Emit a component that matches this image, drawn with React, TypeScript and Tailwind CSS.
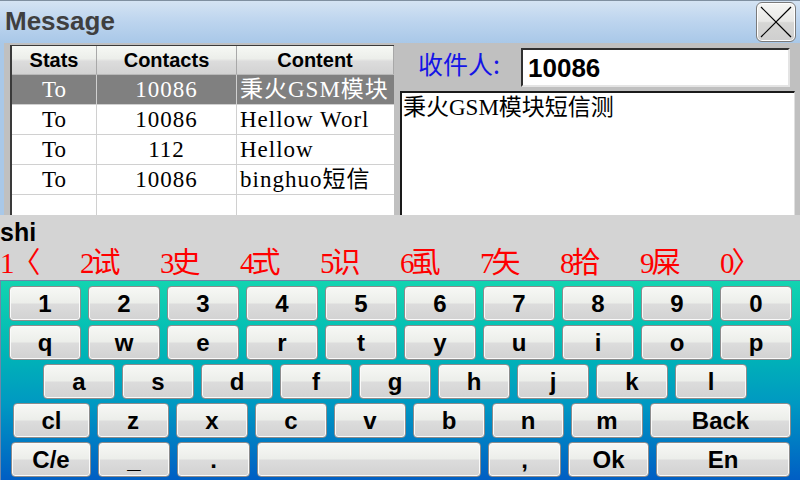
import React from "react";

type Row = { stats: string; contact: string; content: string; selected?: boolean };

const rows: Row[] = [
  { stats: "To", contact: "10086", content: "秉火GSM模块", selected: true },
  { stats: "To", contact: "10086", content: "Hellow Worl" },
  { stats: "To", contact: "112", content: "Hellow" },
  { stats: "To", contact: "10086", content: "binghuo短信" },
  { stats: "", contact: "", content: "" },
];

const candidates = ["1〈", "2试", "3史", "4式", "5识", "6虱", "7矢", "8拾", "9屎", "0〉"];

type Key = { label: string; w: string };

const k = (label: string, w = "w-[72px]"): Key => ({ label, w });

const row1 = "1234567890".split("").map((c) => k(c));
const row2 = "qwertyuiop".split("").map((c) => k(c));
const row3 = "asdfghjkl".split("").map((c) => k(c));
const row4 = [k("cl", "w-[77px]"), ..."zxcvbnm".split("").map((c) => k(c)), k("Back", "w-[141px]")];
const row5 = [
  k("C/e", "w-[80px]"),
  k("_"),
  k(".", "w-[73px]"),
  k("", "w-[224px]"),
  k(",", "w-[73px]"),
  k("Ok", "w-[81px]"),
  k("En", "w-[134px]"),
];

const KeyButton = ({ item }: { item: Key }) => (
  <div
    className={`${item.w} h-[35px] shrink-0 rounded-[4px] border border-[#8c8c8c] bg-[linear-gradient(180deg,#f7f8f5_0%,#eceeea_48%,#dcdcdc_52%,#d2d2d2_100%)] shadow-[inset_0_0_0_1px_#fafafa] flex items-center justify-center text-[24px] font-bold text-black leading-none`}
  >
    {item.label}
  </div>
);

const KeyRow = ({ keys, className }: { keys: Key[]; className: string }) => (
  <div className={`flex gap-[7px] ${className}`}>
    {keys.map((item, i) => (
      <KeyButton key={i} item={item} />
    ))}
  </div>
);

const serif = "font-['Liberation_Serif','Noto_Sans_CJK_SC',serif]";

export default function App() {
  return (
    <div className="w-[800px] h-[480px] overflow-hidden flex flex-col font-['Liberation_Sans','Noto_Sans_CJK_SC',sans-serif] bg-[#c0c0c0]">
      {/* title bar */}
      <div className="h-[43px] shrink-0 flex items-start justify-between border-t border-[#7f8fa0] bg-[linear-gradient(180deg,#d4e3f3_0%,#bcd4ee_50%,#a9c8e8_100%)] pl-[5px] pr-[4px]">
        <div className="text-[26px] font-bold text-[#3f3f3f] leading-none mt-[7px]">Message</div>
        <div className="w-[40px] h-[40px] mt-[1px] rounded-[6px] border border-[#7a7a7a] bg-[linear-gradient(180deg,#f6f6f4_0%,#e8e8e6_48%,#d6d6d4_52%,#cfcfcf_100%)] shadow-[inset_0_0_0_1px_#ffffff] flex items-center justify-center">
          <svg width="34" height="34" viewBox="0 0 34 34">
            <line x1="2" y1="2" x2="32" y2="32" stroke="#000" strokeWidth="1.2" />
            <line x1="32" y1="2" x2="2" y2="32" stroke="#000" strokeWidth="1.2" />
          </svg>
        </div>
      </div>

      {/* main */}
      <div className="h-[172px] shrink-0 flex border-l-[4px] border-[#a9c8e8] pl-[6px] pt-[2px] overflow-hidden">
        <div className="w-[384px] shrink-0 border-l-2 border-t border-[#3a3a3a] bg-white h-[200px]">
          <div className="grid grid-cols-[85px_140px_157px] h-[29px] bg-[linear-gradient(180deg,#f6f8f4_0%,#eceeea_45%,#dcdcdc_55%,#d2d2d2_100%)] border-b border-[#b8b8b8]">
            {["Stats", "Contacts", "Content"].map((h) => (
              <div key={h} className="flex items-center justify-center border-r border-[#a8a8a8] text-[20px] font-bold text-black leading-none">
                {h}
              </div>
            ))}
          </div>
          {rows.map((r, i) => (
            <div
              key={i}
              className={`grid grid-cols-[85px_140px_157px] h-[30px] border-b border-[#d0d0d0] ${serif} text-[23px] leading-none ${
                r.selected ? "bg-[#808080] text-white" : "bg-white text-black"
              }`}
            >
              <div className="flex items-center justify-center border-r border-[#d0d0d0]">{r.stats}</div>
              <div className="flex items-center justify-center border-r border-[#d0d0d0] tracking-[1px]">{r.contact}</div>
              <div className="flex items-center pl-[3px] whitespace-nowrap overflow-hidden tracking-[1px]">{r.content}</div>
            </div>
          ))}
        </div>

        <div className="ml-[6px] w-[395px] shrink-0 flex flex-col">
          <div className="flex items-start h-[46px]">
            <div className="w-[121px] pl-[18px] pt-[6px] text-[25px] text-[#1414e6] leading-none font-['Noto_Sans_CJK_SC',sans-serif]">
              收件人:
            </div>
            <div className="mt-[3px] w-[269px] h-[39px] bg-white border-2 border-t-[#303030] border-l-[#303030] border-r-[#e4e4e4] border-b-[#e4e4e4] flex items-center pl-[5px] text-[26px] font-bold text-black leading-none">
              10086
            </div>
          </div>
          <div className="mt-[2px] h-[130px] bg-white border-t-2 border-l-2 border-[#1a1a1a] border-r border-r-[#e0e0e0] pl-[1px] pt-[1px]">
            <div className={`${serif} text-[23px] leading-tight text-black`}>秉火GSM模块短信测</div>
          </div>
        </div>
      </div>

      {/* IME candidate bar */}
      <div className="h-[65px] shrink-0 bg-[#d4d4d4] flex flex-col">
        <div className="h-[32px] flex items-end pb-[2px] text-[25px] font-bold text-black leading-none">shi</div>
        <div className="flex">
          {candidates.map((c) => (
            <div key={c} className={`w-[80px] text-[29px] leading-[32px] text-[#ff0000] ${serif} whitespace-nowrap tracking-[-3px]`}>
              {c}
            </div>
          ))}
        </div>
      </div>

      {/* keyboard */}
      <div className="h-[200px] shrink-0 border-t border-l border-[#6f86a8] bg-[linear-gradient(180deg,#12d4b0_0%,#00b6b6_35%,#0098c2_62%,#005ec4_100%)] pt-[5px] flex flex-col gap-[4px]">
        <KeyRow keys={row1} className="pl-[8px]" />
        <KeyRow keys={row2} className="pl-[8px]" />
        <KeyRow keys={row3} className="pl-[42px]" />
        <KeyRow keys={row4} className="pl-[12px]" />
        <KeyRow keys={row5} className="pl-[10px]" />
      </div>
    </div>
  );
}
